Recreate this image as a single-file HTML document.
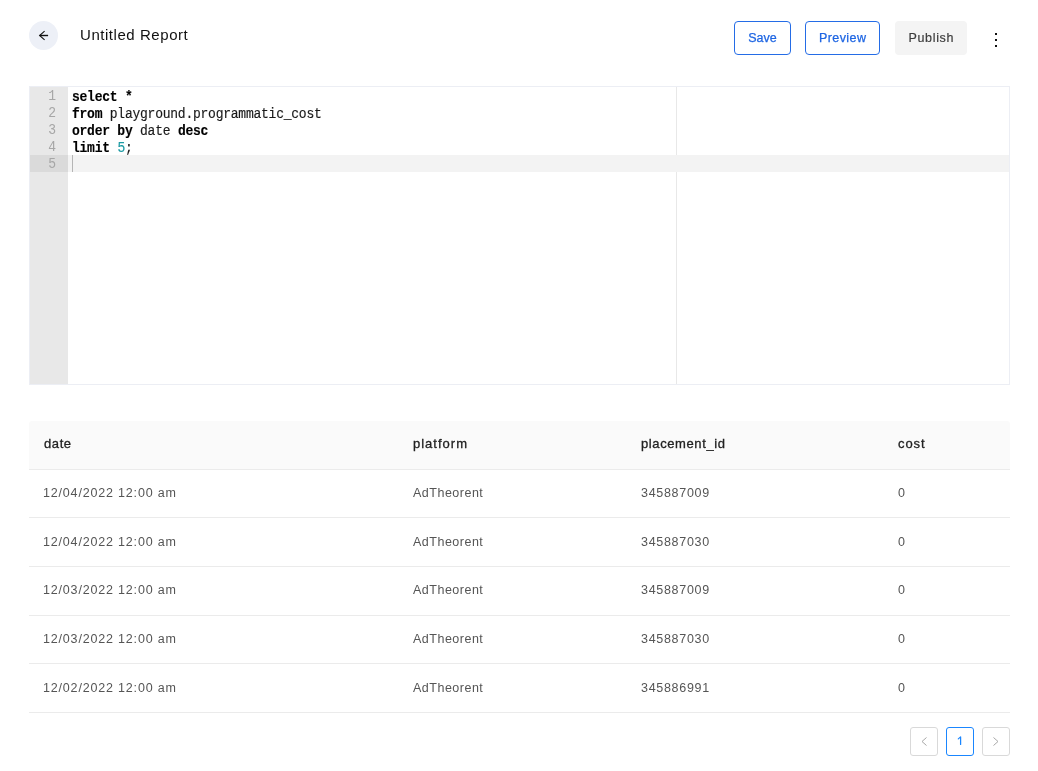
<!DOCTYPE html>
<html><head><meta charset="utf-8">
<style>
*{box-sizing:border-box;margin:0;padding:0}
html,body{width:1038px;height:771px;overflow:hidden;background:#fff}
body{position:relative;font-family:"Liberation Sans",sans-serif;color:#1a1a1a}
.abs{position:absolute}
.wrap{position:absolute;left:0;top:0;width:1038px;height:771px;will-change:transform}
.back{left:29px;top:21px;width:29px;height:29px;border-radius:50%;background:#edf0f7}
.back svg{position:absolute;left:0;top:0}
.title{left:80px;top:26px;font-size:15px;line-height:18px;letter-spacing:0.55px;color:#111;white-space:nowrap}
.btn{top:21px;height:34px;border-radius:4px;font-size:12.5px;font-weight:normal;-webkit-text-stroke:0.25px currentColor;line-height:32px;text-align:center;white-space:nowrap}
.outline{border:1px solid #246ce6;color:#1f66e3;background:#fff}
.pub{background:#f4f4f4;color:#3d3d3d;line-height:34px;-webkit-text-stroke:0.2px currentColor}
.dot{width:2px;height:2px;background:#111;left:995px}
.editor{left:29px;top:86px;width:981px;height:299px;border:1px solid #eceef4;background:#fff;overflow:hidden}
.gutter{left:0;top:0;width:38px;height:297px;background:#e8e8e8}
.vline{left:646px;top:0;width:1px;height:297px;background:#e8e8e8}
.active{left:0;top:68px;width:979px;height:17px;background:#f3f3f3}
.activeg{left:0;top:68px;width:38px;height:17px;background:#dadada}
.ln{left:0;width:26px;text-align:right;font-family:"Liberation Mono",monospace;font-size:13px;line-height:17px;color:#a6a6a6;transform:translateY(1px) scaleY(1.08);transform-origin:0 12px}
.code{left:42px;font-family:"Liberation Mono",monospace;font-size:13px;letter-spacing:-0.24px;line-height:17px;color:#1a1a1a;-webkit-text-stroke:0.15px #1a1a1a;white-space:pre;transform:translateY(1.5px) scaleY(1.13);transform-origin:0 12px}
.code b{font-weight:bold;color:#000}
.num{color:#1b9aa3;-webkit-text-stroke:0.15px #1b9aa3}
.cursor{left:42px;top:68px;width:1px;height:17px;background:#b5b5b5}
.thead{left:29px;top:421px;width:981px;height:49px;background:#fafafa;border-bottom:1px solid #ebebeb;border-radius:3px 3px 0 0}
.row{left:29px;width:981px;border-bottom:1px solid #ebebeb}
.th{font-size:13px;font-weight:normal;-webkit-text-stroke:0.3px #222;color:#222;white-space:nowrap;line-height:16px;letter-spacing:0.6px}
.td{font-size:12.5px;color:#555;white-space:nowrap;line-height:16px;letter-spacing:0.7px}
.td.t{letter-spacing:0.5px}
.td.d{letter-spacing:0.82px}
.pg{top:727px;width:28px;height:29px;border:1px solid #d9d9d9;border-radius:3px;background:#fff}
.pg.on{border-color:#1a86ff;color:#1b7cf5;font-size:13px;text-align:center;line-height:27px}
</style></head><body><div class="wrap">

<div class="abs back"><svg width="29" height="29" viewBox="0 0 29 29"><path d="M10.6 14.5H19.1" fill="none" stroke="#111" stroke-width="1.4"/><path d="M15.6 10.1L10.6 14.5L15.6 18.9" fill="none" stroke="#111" stroke-width="1.05"/></svg></div>
<div class="abs title">Untitled Report</div>

<div class="abs btn outline" style="left:734px;width:57px;letter-spacing:0.05px">Save</div>
<div class="abs btn outline" style="left:805px;width:75px;letter-spacing:0.4px;padding-left:0.4px">Preview</div>
<div class="abs btn pub" style="left:895px;width:72px;letter-spacing:0.65px;padding-left:0.65px">Publish</div>
<div class="abs dot" style="top:33px"></div>
<div class="abs dot" style="top:39px"></div>
<div class="abs dot" style="top:45px"></div>

<div class="abs editor">
  <div class="abs gutter"></div>
  <div class="abs vline"></div>
  <div class="abs active"></div>
  <div class="abs activeg"></div>
  <div class="abs ln" style="top:0">1</div>
  <div class="abs ln" style="top:17px">2</div>
  <div class="abs ln" style="top:34px">3</div>
  <div class="abs ln" style="top:51px">4</div>
  <div class="abs ln" style="top:68px">5</div>
  <div class="abs code" style="top:0px"><b>select</b> <b>*</b></div>
  <div class="abs code" style="top:17px"><b>from</b> playground.programmatic_cost</div>
  <div class="abs code" style="top:34px"><b>order by</b> date <b>desc</b></div>
  <div class="abs code" style="top:51px"><b>limit</b> <span class="num">5</span>;</div>
  <div class="abs cursor"></div>
</div>

<div class="abs thead"></div>
<div class="abs th" style="left:44px;top:436px">date</div>
<div class="abs th" style="left:413px;top:436px;letter-spacing:1px">platform</div>
<div class="abs th" style="left:641px;top:436px">placement_id</div>
<div class="abs th" style="left:898px;top:436px;letter-spacing:0.9px">cost</div>

<div class="abs row" style="top:470px;height:48px"></div>
<div class="abs row" style="top:518px;height:49px"></div>
<div class="abs row" style="top:567px;height:49px"></div>
<div class="abs row" style="top:616px;height:48px"></div>
<div class="abs row" style="top:664px;height:49px"></div>

<div class="abs td d" style="left:43px;top:485px">12/04/2022 12:00 am</div>
<div class="abs td t" style="left:413px;top:485px">AdTheorent</div>
<div class="abs td" style="left:641px;top:485px">345887009</div>
<div class="abs td" style="left:898px;top:485px">0</div>

<div class="abs td d" style="left:43px;top:534px">12/04/2022 12:00 am</div>
<div class="abs td t" style="left:413px;top:534px">AdTheorent</div>
<div class="abs td" style="left:641px;top:534px">345887030</div>
<div class="abs td" style="left:898px;top:534px">0</div>

<div class="abs td d" style="left:43px;top:582px">12/03/2022 12:00 am</div>
<div class="abs td t" style="left:413px;top:582px">AdTheorent</div>
<div class="abs td" style="left:641px;top:582px">345887009</div>
<div class="abs td" style="left:898px;top:582px">0</div>

<div class="abs td d" style="left:43px;top:631px">12/03/2022 12:00 am</div>
<div class="abs td t" style="left:413px;top:631px">AdTheorent</div>
<div class="abs td" style="left:641px;top:631px">345887030</div>
<div class="abs td" style="left:898px;top:631px">0</div>

<div class="abs td d" style="left:43px;top:680px">12/02/2022 12:00 am</div>
<div class="abs td t" style="left:413px;top:680px">AdTheorent</div>
<div class="abs td" style="left:641px;top:680px">345886991</div>
<div class="abs td" style="left:898px;top:680px">0</div>

<div class="abs pg" style="left:910px"><svg width="26" height="27" viewBox="0 0 26 27" style="position:absolute;left:0;top:0"><path d="M15.5 9.5L11 13.5L15.5 17.5" fill="none" stroke="#a3a3a3" stroke-width="0.95"/></svg></div>
<div class="abs pg on" style="left:946px"><svg width="26" height="27" viewBox="0 0 26 27" style="position:absolute;left:0;top:0"><path d="M11.3 10.9L13.6 8.9V16.4" fill="none" stroke="#1a86ff" stroke-width="1.25" stroke-linecap="round" stroke-linejoin="round"/></svg></div>
<div class="abs pg" style="left:982px"><svg width="26" height="27" viewBox="0 0 26 27" style="position:absolute;left:0;top:0"><path d="M10.5 9.5L15 13.5L10.5 17.5" fill="none" stroke="#a3a3a3" stroke-width="0.95"/></svg></div>

</div></body></html>
